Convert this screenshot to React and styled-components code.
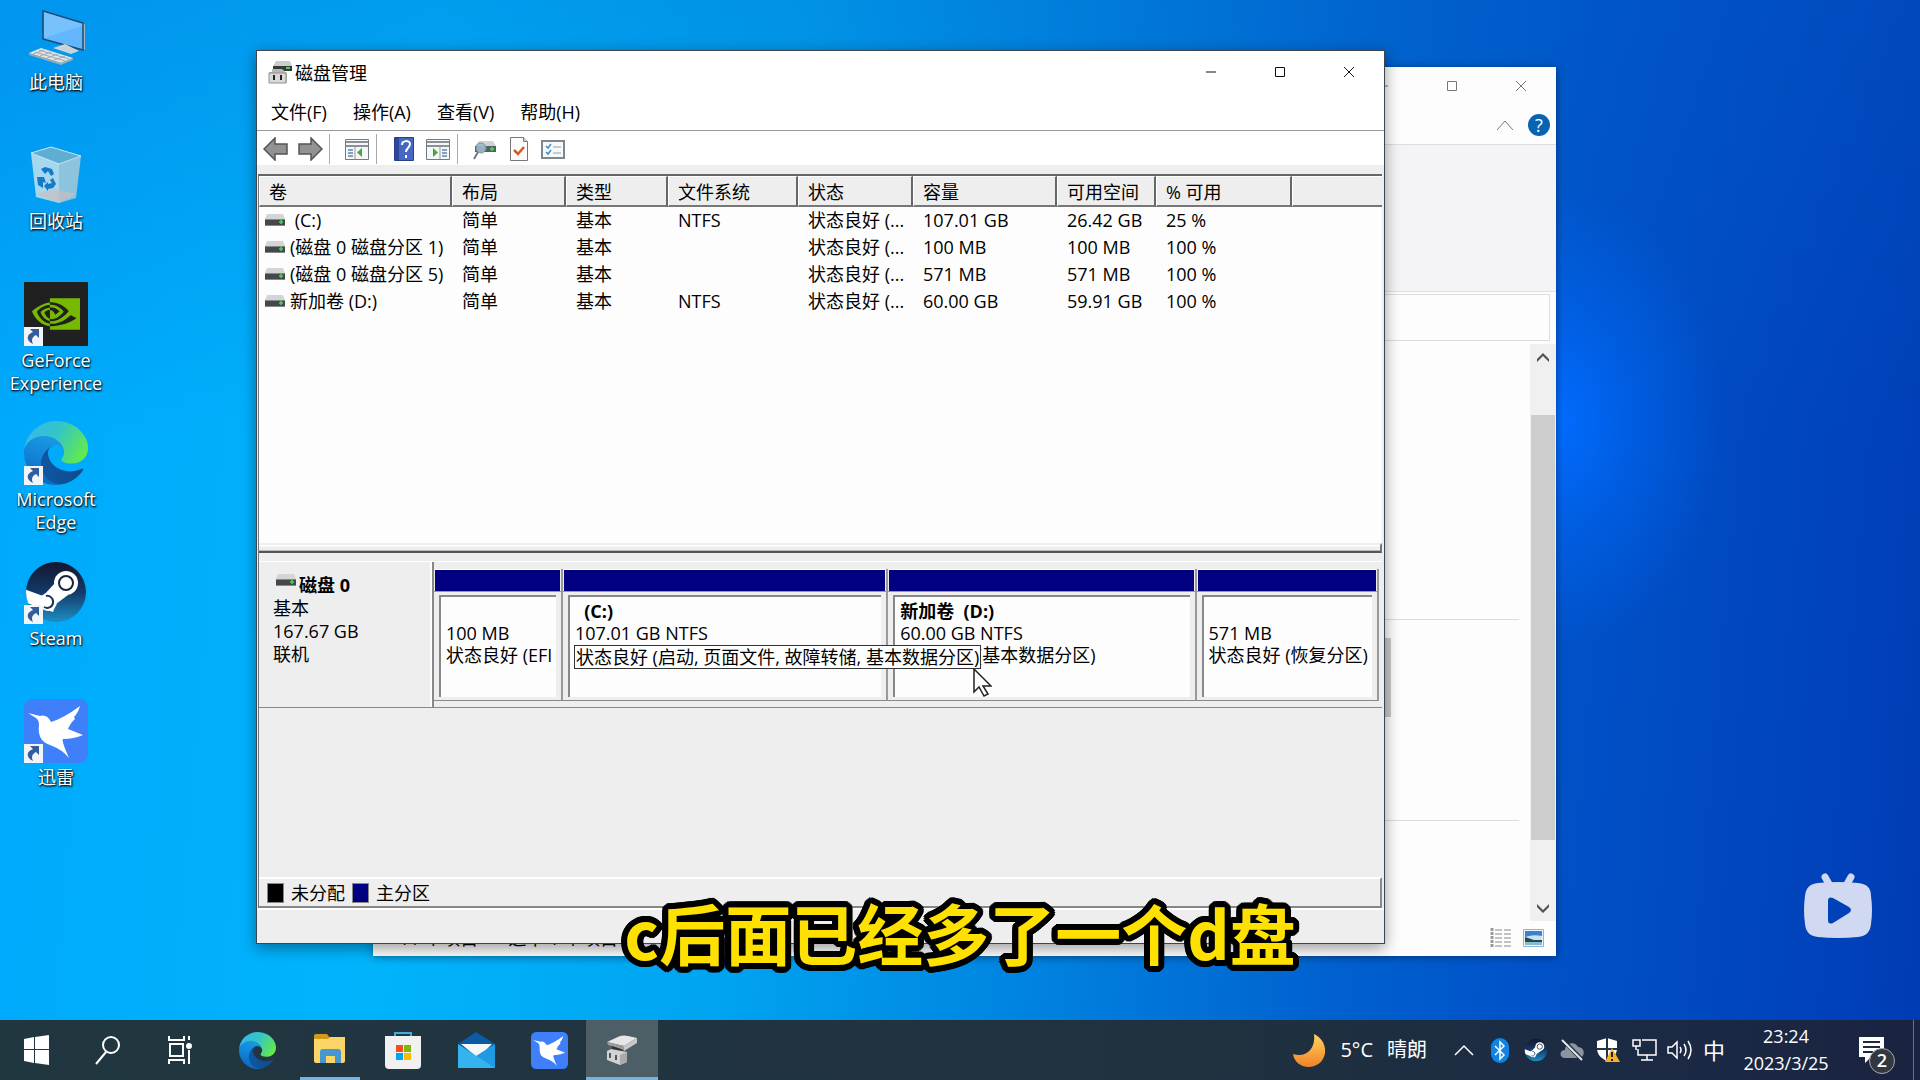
import React from "react"
import styled, { createGlobalStyle, css } from "styled-components"
import { SiNvidia } from "react-icons/si"

const volumes = [
  ["\u00a0(C:)", "简单", "基本", "NTFS", "状态良好 (...", "107.01 GB", "26.42 GB", "25 %"],
  ["(磁盘 0 磁盘分区 1)", "简单", "基本", "", "状态良好 (...", "100 MB", "100 MB", "100 %"],
  ["(磁盘 0 磁盘分区 5)", "简单", "基本", "", "状态良好 (...", "571 MB", "571 MB", "100 %"],
  ["新加卷 (D:)", "简单", "基本", "NTFS", "状态良好 (...", "60.00 GB", "59.91 GB", "100 %"],
]

const columns = [
  { title: "卷", width: 193 },
  { title: "布局", width: 114 },
  { title: "类型", width: 102 },
  { title: "文件系统", width: 130 },
  { title: "状态", width: 115 },
  { title: "容量", width: 144 },
  { title: "可用空间", width: 99 },
  { title: "% 可用", width: 136 },
]

// a hovered partition shows its whole status in the tip
const partitions = [
  { name: "", size: "100 MB", status: "状态良好 (EFI", grow: 128 },
  {
    name: "\u00a0\u00a0(C:)",
    size: "107.01 GB NTFS",
    tip: "状态良好 (启动, 页面文件, 故障转储, 基本数据分区)",
    grow: 326,
  },
  { name: "新加卷  (D:)", size: "60.00 GB NTFS", status: "状态良好 (基本数据分区)", grow: 309 },
  { name: "", size: "571 MB", status: "状态良好 (恢复分区)", grow: 182 },
]

const menus = ["文件(F)", "操作(A)", "查看(V)", "帮助(H)"]

export default function App() {
  return (
    <Desktop>
      <GlobalStyle />
      <Workspace>
        <Shortcuts>
          <Shortcut icon={<ComputerIcon />} label="此电脑" />
          <Shortcut icon={<BinIcon />} label="回收站" />
          <Shortcut icon={<NvidiaTile />} label="GeForce Experience" linked />
          <Shortcut icon={<EdgeIcon size={64} />} label="Microsoft Edge" linked />
          <Shortcut icon={<SteamIcon size={64} />} label="Steam" linked />
          <Shortcut icon={<BirdIcon width={64} height={64} />} label="迅雷" linked />
        </Shortcuts>
        <Explorer />
        <DiskManager />
        <Watermark viewBox="0 0 68 66" aria-label="bilibili">
          <path d="M21 4l4 7M47 4l-4 7" stroke="#d0d9f1" strokeWidth="7" strokeLinecap="round" />
          <path
            fillRule="evenodd"
            fill="#d0d9f1"
            d="M14 10Q34 8 54 10 67 11 67 23Q69 37 67 51 66 63 54 64 34 66 14 64 2 63 1 51-1 37 1 23 2 11 14 10zM24 28v19q0 5 5 3l16-10q4-3 0-6L29 25q-5-2-5 3z"
          />
        </Watermark>
        <Subtitle>c后面已经多了一个d盘</Subtitle>
      </Workspace>
      <Taskbar />
    </Desktop>
  )
}

function Shortcut({ icon, label, linked }) {
  return (
    <ShortcutButton>
      <ShortcutIcon>
        {icon}
        {linked && (
          <LinkMark viewBox="0 0 19 19">
            <path d="M0 0h19v19H0z" fill="#f1f5f8" />
            <path d="M6 2h9v9l-3-3c-4 2-5 5-3 9-8-4-6-10 0-12z" fill="#345b9b" />
          </LinkMark>
        )}
      </ShortcutIcon>
      <ShortcutLabel>{label}</ShortcutLabel>
    </ShortcutButton>
  )
}

function WindowButtons({ dim }) {
  return (
    <Captions $dim={dim}>
      <button aria-label="最小化">
        <svg width="12" height="12" viewBox="0 0 12 12">
          <path d="M1 6h10" />
        </svg>
      </button>
      <button aria-label="最大化">
        <svg width="12" height="12" viewBox="0 0 12 12">
          <path d="M1.500 1.500h9v9h-9z" />
        </svg>
      </button>
      <button aria-label="关闭">
        <svg width="12" height="12" viewBox="0 0 12 12">
          <path d="M1 1l10 10M11 1L1 11" />
        </svg>
      </button>
    </Captions>
  )
}

function Explorer() {
  return (
    <ExplorerWindow>
      <ExplorerTitle>
        <WindowButtons dim />
      </ExplorerTitle>
      <ExplorerTabs>
        <svg width="18" height="12" viewBox="0 0 18 12" fill="none" stroke="#777">
          <path d="M1 11L9 2l8 9" />
        </svg>
        <HelpButton aria-label="帮助">?</HelpButton>
      </ExplorerTabs>
      <Ribbon />
      <AddressRow>
        <input aria-label="搜索" />
      </AddressRow>
      <ExplorerBody>
        <FileArea>
          <Group $size={276} />
          <Group $size={201}>
            <span />
          </Group>
        </FileArea>
        <ScrollBar>
          <svg width="14" height="14" viewBox="0 0 14 14">
            <path d="M1 9l6-6 6 6v3L7 6l-6 6z" />
          </svg>
          <ScrollTrack>
            <ScrollThumb />
          </ScrollTrack>
          <svg width="14" height="14" viewBox="0 0 14 14">
            <path d="M1 6l6 6 6-6V3L7 9 1 3z" />
          </svg>
        </ScrollBar>
      </ExplorerBody>
      <ExplorerStatus>
        <span>11 个项目</span>
        <span>选中 1 个项目</span>
        <ViewButtons>
          <button aria-label="详细信息">
            <svg width="21" height="20" viewBox="0 0 21 20" fill="none">
              <path d="M2 0v20" stroke="#999" strokeWidth="3" strokeDasharray="3 1" />
              <path d="M5 2h7m2 0h7M5 6h7m2 0h7M5 10h7m2 0h7M5 14h7m2 0h7M5 18h7m2 0h7" stroke="#888" />
            </svg>
          </button>
          <button aria-label="大图标">
            <svg width="21" height="18" viewBox="0 0 21 18">
              <path d="M.5.5h20v17H.5z" fill="#eef5fa" stroke="#8fb4d0" />
              <path d="M2 2h17v14H2z" fill="#3d7fd0" />
              <path d="M2 8q8-3 17-1v4H2z" fill="#c8e4f0" />
              <path d="M2 8l9 3h8v2H2z" fill="#234d48" />
              <path d="M2 13h17v3H2z" fill="#8ab9d6" />
            </svg>
          </button>
        </ViewButtons>
      </ExplorerStatus>
    </ExplorerWindow>
  )
}

function DiskManager() {
  return (
    <ManagerWindow>
      <TitleBar>
        <PlugIcon />
        <h1>磁盘管理</h1>
        <WindowButtons />
      </TitleBar>
      <MenuBar>
        {menus.map(item => (
          <button key={item}>{item}</button>
        ))}
      </MenuBar>
      <ToolBar>
        <button aria-label="后退">
          <ArrowIcon />
        </button>
        <button aria-label="前进">
          <ArrowIcon flip />
        </button>
        <hr />
        <button aria-label="显示控制台树">
          <PaneIcon />
        </button>
        <hr />
        <button aria-label="帮助">
          <BookIcon />
        </button>
        <button aria-label="显示操作窗格">
          <PaneIcon flip />
        </button>
        <hr />
        <button aria-label="重新扫描磁盘">
          <svg width="24" height="24" viewBox="0 0 24 24">
            <path d="M6 4h14l3 5H2z" fill="#d0d3d5" />
            <path d="M2 9h21v6H2z" fill="#555f66" />
            <circle cx="8" cy="11" r="5" fill="#9db9c8" fillOpacity=".9" stroke="#7c929e" />
            <path d="M5 15l-4 7" stroke="#778" strokeWidth="2" />
            <path d="M17 12h4M19 10v4" stroke="#3fd13f" strokeWidth="2" />
          </svg>
        </button>
        <button aria-label="属性">
          <svg width="18" height="24" viewBox="0 0 18 24">
            <path d="M.5.5h13l4 4v19H.5z" fill="#fcfcfc" stroke="#777" />
            <path d="M13.500.5v4h4" fill="#ddd" stroke="#777" />
            <path d="M4 13l4 4 6-7" fill="none" stroke="#d8581e" strokeWidth="2.500" />
          </svg>
        </button>
        <button aria-label="列表">
          <svg width="24" height="19" viewBox="0 0 24 19">
            <path d="M1 1h22v17H1z" fill="#f7f8f9" stroke="#7f868c" strokeWidth="2" />
            <path d="M5 6l2 2 3-4M5 12l2 2 3-4" fill="none" stroke="#3b8cc4" strokeWidth="1.500" />
            <path d="M12 7h8M12 13h8" stroke="#b4babf" strokeWidth="1.500" />
          </svg>
        </button>
      </ToolBar>
      <Panes>
        <ListPane>
          <VolumeTable>
            <colgroup>
              {columns.map(col => (
                <Col key={col.title} $size={col.width} />
              ))}
              <col />
            </colgroup>
            <thead>
              <tr>
                {columns.map(col => (
                  <th key={col.title}>{col.title}</th>
                ))}
                <th aria-label="空" />
              </tr>
            </thead>
            <tbody>
              {volumes.map(row => (
                <tr key={row[0]}>
                  {row.map((cell, i) => (
                    <td key={columns[i].title}>
                      {i === 0 && <DriveIcon />}
                      {cell}
                    </td>
                  ))}
                  <td />
                </tr>
              ))}
            </tbody>
          </VolumeTable>
        </ListPane>
        <Splitter />
        <DiskPane>
          <DiskRow>
            <DiskInfo>
              <strong>
                <DriveIcon />
                磁盘 0
              </strong>
              <p>基本</p>
              <p>167.67 GB</p>
              <p>联机</p>
            </DiskInfo>
            <PartitionStrip>
              {partitions.map(part => (
                <Partition key={part.size} $grow={part.grow}>
                  <PartitionBar />
                  <PartitionBody>
                    <PartitionText>
                      <strong>{part.name}</strong>
                      <p>{part.size}</p>
                      {part.status && <p>{part.status}</p>}
                    </PartitionText>
                    {part.tip && (
                      <Tip role="tooltip">
                        {part.tip}
                        <Cursor viewBox="0 0 19 29">
                          <path d="M1 1v23l5-5 5 9 4-2-5-8h8z" fill="#fff" stroke="#222" strokeWidth="1.500" />
                        </Cursor>
                      </Tip>
                    )}
                  </PartitionBody>
                </Partition>
              ))}
            </PartitionStrip>
          </DiskRow>
        </DiskPane>
        <Legend>
          <Swatch $color="#000" />
          <span>未分配</span>
          <Swatch $color="#000080" />
          <span>主分区</span>
        </Legend>
      </Panes>
      <StatusBar />
    </ManagerWindow>
  )
}

function Taskbar() {
  return (
    <Bar>
      <SystemButtons>
        <button aria-label="开始">
          <svg width="25" height="30" viewBox="0 0 25 30" fill="#fff">
            <path d="M0 4l10-2v12H0zM11 2l14-2v14H11zM0 15h10v13L0 26zM11 15h14v15l-14-2z" />
          </svg>
        </button>
        <button aria-label="搜索">
          <svg width="26" height="32" viewBox="0 0 26 32" fill="none" stroke="#fff" strokeWidth="2">
            <circle cx="16" cy="11" r="8" />
            <path d="M11 18L1 30" />
          </svg>
        </button>
        <button aria-label="任务视图">
          <svg width="26" height="30" viewBox="0 0 26 30" fill="none" stroke="#fff" strokeWidth="2">
            <path d="M2 1v4h15V1M2 29v-4h15v4M3 9h13v12H3zM22 1v4M22 15v14" />
            <circle cx="22" cy="11" r="2" fill="#fff" />
          </svg>
        </button>
      </SystemButtons>
      <TaskButton aria-label="Microsoft Edge">
        <EdgeIcon size={37} />
      </TaskButton>
      <TaskButton aria-label="文件资源管理器" $open>
        <svg width="34" height="34" viewBox="0 0 34 34">
          <path d="M1 3q0-2 2-2h11l3 4v8H1z" fill="#d29a16" />
          <path d="M1 6h14l2-2h15v24q0 2-2 2H3q-2 0-2-2z" fill="#fbd567" />
          <path d="M7 30V19q0-3 3-3h15q3 0 3 3v11h-6v-7h-9v7z" fill="#4796d0" />
        </svg>
      </TaskButton>
      <TaskButton aria-label="Microsoft Store">
        <svg width="36" height="38" viewBox="0 0 36 38">
          <path d="M10 8V2h16v6" fill="none" stroke="#44a9df" strokeWidth="2" />
          <path d="M0 5h36v29q0 4-4 4H4q-4 0-4-4z" fill="#f1f1f1" />
          <path d="M11 14h7v7h-7z" fill="#f25022" />
          <path d="M19 14h7v7h-7z" fill="#7fba00" />
          <path d="M11 22h7v7h-7z" fill="#00a4ef" />
          <path d="M19 22h7v7h-7z" fill="#ffb900" />
        </svg>
      </TaskButton>
      <TaskButton aria-label="邮件">
        <svg width="37" height="36" viewBox="0 0 37 36">
          <path d="M0 12L18 0l19 12v10H0z" fill="#0c59a4" />
          <path d="M3 12h31L20 26z" fill="#f4f7f9" />
          <path d="M37 12v24H18V24z" fill="#1e9be2" />
          <path d="M0 12l37 24H0z" fill="#35b3ee" />
        </svg>
      </TaskButton>
      <TaskButton aria-label="迅雷">
        <BirdIcon width={37} height={37} />
      </TaskButton>
      <TaskButton aria-label="磁盘管理" $open $active>
        <svg width="34" height="34" viewBox="0 0 34 34">
          <path d="M2 9L15 3q4-1 8 0l9 2-13 8z" fill="#e6e6e6" />
          <path d="M2 9l17 4v4L3 12z" fill="#9c9c9c" />
          <path d="M19 13l13-8v5l-13 8z" fill="#c7c7c7" />
          <path d="M7 13l9 3 2 2-4 2-7-3z" fill="#333" />
          <path d="M2 18l4-2 16 3v10l-7 3-13-5z" fill="#d2d2d2" />
          <path d="M15 22l7-3v10l-7 3z" fill="#aaa" />
          <path d="M5 20v5M11 22v5" stroke="#555" strokeWidth="2" />
        </svg>
      </TaskButton>
      <Tray>
        <Weather>
          <svg width="34" height="35" viewBox="0 0 34 35">
            <defs>
              <linearGradient id="moon" x2="0" y2="1">
                <stop stopColor="#ffd45b" />
                <stop offset="1" stopColor="#f2812a" />
              </linearGradient>
            </defs>
            <path d="M22 1C39 9 36 33 17 34 8 34 2 28 1 21 14 25 24 16 22 1z" fill="url(#moon)" />
          </svg>
          <span>5°C</span>
          <span>晴朗</span>
        </Weather>
        <TrayButton aria-label="显示隐藏的图标">
          <svg width="20" height="12" viewBox="0 0 20 12" fill="none" stroke="#fff" strokeWidth="1.500">
            <path d="M1 11l9-9 9 9" />
          </svg>
        </TrayButton>
        <TrayButton aria-label="蓝牙">
          <svg width="18" height="25" viewBox="0 0 18 25">
            <rect width="18" height="25" rx="9" fill="#0f84e6" />
            <path d="M4 8l9 9-4 4V4l4 4-9 9" fill="none" stroke="#fff" strokeWidth="1.500" />
          </svg>
        </TrayButton>
        <TrayButton aria-label="Steam">
          <SteamIcon size={24} />
        </TrayButton>
        <TrayButton aria-label="OneDrive">
          <svg width="25" height="22" viewBox="0 0 25 22">
            <path d="M5 19c-6 0-6-8 0-8 0-8 11-9 13-3 7 0 8 10 1 11z" fill="#8c949f" />
            <path d="M3 1l19 20" stroke="#1e2d40" strokeWidth="4" />
            <path d="M2 1l20 20" stroke="#e4e7ea" strokeWidth="2" />
          </svg>
        </TrayButton>
        <TrayButton aria-label="Windows 安全中心">
          <svg width="24" height="26" viewBox="0 0 24 26">
            <path d="M11 1l10 3v7c0 7-5 11-10 13C6 22 1 18 1 11V4z" fill="#fff" />
            <path d="M11 1v22M1 12h20" stroke="#253347" strokeWidth="2" />
            <path d="M16 11l8 14H9z" fill="#f6b125" />
            <path d="M16 15v5M16 22v2" stroke="#222" strokeWidth="2" />
          </svg>
        </TrayButton>
        <TrayButton aria-label="网络">
          <svg width="25" height="24" viewBox="0 0 25 24" fill="none" stroke="#fff" strokeWidth="1.500">
            <path d="M10 2h14v15H6v-6M15 17v5M9 22h12M1 2h7v6H1zM4 8v4" />
          </svg>
        </TrayButton>
        <TrayButton aria-label="音量">
          <svg width="26" height="24" viewBox="0 0 26 24" fill="none" stroke="#fff" strokeWidth="1.500">
            <path d="M1 9h4l5-5v16l-5-5H1zM13 9q2 3 0 6M17 6q4 6 0 12M21 3q6 9 0 18" />
          </svg>
        </TrayButton>
        <InputMode>中</InputMode>
        <Clock>
          <time>23:24</time>
          <time>2023/3/25</time>
        </Clock>
        <Notifications aria-label="通知">
          <svg width="25" height="26" viewBox="0 0 25 26">
            <path d="M0 0h25v20H12l-6 6v-6H0z" fill="#fff" />
            <path d="M4 5h17M4 10h17M4 15h10" stroke="#1c2942" strokeWidth="2" />
          </svg>
          <Badge>2</Badge>
        </Notifications>
      </Tray>
    </Bar>
  )
}

/* icons */

function DriveIcon() {
  return (
    <svg width="20" height="13" viewBox="0 0 20 13">
      <path d="M2 0h16l2 5H0z" fill="#d3d5d6" />
      <path d="M0 5h20v7H0z" fill="#45484a" />
      <path d="M0 5h20v1H0zM0 11h20v1H0z" fill="#85888a" />
      <path d="M14 8h4M16 6v4" stroke="#48d648" strokeWidth="1.500" />
    </svg>
  )
}

function PlugIcon() {
  return (
    <svg width="24" height="24" viewBox="0 0 24 24">
      <path d="M8 1h14l2 5H5z" fill="#ccc" />
      <path d="M5 6h19v5H5z" fill="#333b38" />
      <path d="M18 8h4" stroke="#4bd54b" strokeWidth="2" />
      <path d="M4 9h10l5 4v10H1V12h3z" fill="#b7b7b7" />
      <path d="M1 13h17v10H1z" fill="#d9d9d9" stroke="#909090" />
      <path d="M6 15v5M13 15v5" stroke="#222" strokeWidth="2" />
    </svg>
  )
}

function ArrowIcon({ flip }) {
  return (
    <svg width="26" height="24" viewBox="0 0 26 24">
      <path
        transform={flip ? "matrix(-1 0 0 1 26 0)" : undefined}
        d="M1 12L12 1v6h12v10H12v6z"
        fill="#929292"
        stroke="#555"
        strokeWidth="1.500"
      />
    </svg>
  )
}

function PaneIcon({ flip }) {
  return (
    <svg width="24" height="21" viewBox="0 0 24 21">
      <path d="M.5.5h23v20H.5z" fill="#f5f6f7" stroke="#747b80" />
      <path d="M1 3h22M1 7h22" stroke="#8a9196" strokeWidth="2" />
      <g transform={flip ? "matrix(-1 0 0 1 24 0)" : undefined}>
        <path d="M3 11h5M3 14h5M3 17h5" stroke="#5d86ad" strokeWidth="1.500" />
        <path d="M10 8v12" stroke="#999" />
        <path d="M17 9v9l-5-4.500z" fill="#41a935" />
      </g>
    </svg>
  )
}

function BookIcon() {
  return (
    <svg width="20" height="24" viewBox="0 0 20 24">
      <path d="M.5.5h19v23H.5z" fill="#4668c4" stroke="#27408b" />
      <path d="M1 1h4v22H1z" fill="#2c479b" />
      <path d="M8 8c0-5 8-5 8-1 0 4-4 4-4 8M12 18v3" fill="none" stroke="#fff" strokeWidth="2" />
    </svg>
  )
}

function ComputerIcon() {
  return (
    <svg width="64" height="64" viewBox="0 0 64 64">
      <path d="M20 7l41 13v26l-3-1z" fill="#9fb4c0" />
      <path d="M19 7l40 12v27L19 35z" fill="#62b6fb" stroke="#1d4870" strokeWidth="1.500" />
      <path d="M20 34L58 22V20L20 8z" fill="#86c8fd" opacity=".6" />
      <path d="M29 44l12-4 14 7-8 3z" fill="#c9d3d9" />
      <path d="M5 49l12-5 32 10-12 5z" fill="#e0e4e6" />
      <path d="M11 48l30 9M15 46l30 9M20 46l-11 4M27 48l-11 4M34 50l-11 4M41 52l-11 4" stroke="#a0a9ae" />
      <path d="M5 49v2l32 10 12-5v-2l-12 5z" fill="#9da9b0" />
    </svg>
  )
}

function BinIcon() {
  return (
    <svg width="64" height="64" viewBox="0 0 64 64">
      <path d="M7 10l20-6 30 9-22 8z" fill="#5fadd0" />
      <path d="M7 10l28 11v39L12 54z" fill="#a5d7ee" />
      <path d="M57 13L35 21v39l17-5z" fill="#8dc3dd" />
      <path d="M12 51l18-5 22 5-17 9z" fill="#c7bfc2" opacity=".7" />
      <path d="M7 10l20-6 30 9-22 8z" fill="none" stroke="#c5e6f4" />
      <g fill="#1679c8">
        <path d="M17 26l4-2 7 2 2 5-3 2-3-5-3 3z" />
        <path d="M13 34l7 0 2 6-3-1 0 6-5-3z" />
        <path d="M29 35l3 6-3 4-5 1v2l-4-5 4-4v2l4-1-2-3z" />
      </g>
    </svg>
  )
}

function NvidiaTile() {
  return (
    <NvidiaBox>
      <SiNvidia size={48} />
    </NvidiaBox>
  )
}

function EdgeIcon({ size }) {
  const id = `edge${size}`
  return (
    <svg width={size} height={size} viewBox="0 0 256 256">
      <defs>
        <linearGradient id={`${id}a`} x1="0" x2="1">
          <stop stopColor="#0c59a4" />
          <stop offset="1" stopColor="#114a8b" />
        </linearGradient>
        <linearGradient id={`${id}b`} x1=".6" y1="0" x2=".3" y2="1">
          <stop stopColor="#1b9de2" />
          <stop offset=".5" stopColor="#1383d6" />
          <stop offset="1" stopColor="#0863b8" />
        </linearGradient>
        <linearGradient id={`${id}c`} x1="0" y1=".3" x2="1" y2=".7">
          <stop stopColor="#35b8ee" />
          <stop offset=".45" stopColor="#34c6c6" />
          <stop offset="1" stopColor="#66eb45" />
        </linearGradient>
      </defs>
      <path
        fill={`url(#${id}a)`}
        d="M231.07 190.54c-3.400 1.770-6.900 3.360-10.510 4.740a101.800 101.800 0 01-35.900 6.460c-47.310 0-88.540-32.540-88.540-74.310A31.480 31.480 0 01112.550 100c-42.800 1.800-53.800 46.400-53.800 72.530 0 73.880 68.100 81.370 82.760 81.370 7.910 0 19.840-2.300 27-4.560l1.310-.44a128.340 128.340 0 0066.600-52.800 4 4 0 00-5.350-5.560z"
      />
      <path
        fill={`url(#${id}b)`}
        d="M105.730 241.420a79.200 79.200 0 01-22.740-21.340 80.720 80.720 0 0129.530-120c3.120-1.470 8.450-4.130 15.540-4a32.350 32.350 0 0125.690 13 31.880 31.880 0 016.360 18.660c0-.21 24.460-79.600-80-79.600-43.900 0-80 41.660-80 78.210a130.150 130.150 0 0012.110 56 128 128 0 00156.380 67.110 75.550 75.550 0 01-62.780-8z"
      />
      <path
        fill={`url(#${id}c)`}
        d="M152.290 148.860c-.81 1.050-3.300 2.500-3.300 5.660 0 2.610 1.700 5.120 4.720 7.230 14.380 10 41.490 8.680 41.560 8.680a59.560 59.560 0 0030.270-8.350A61.380 61.380 0 00256 109.240c.26-22.410-8-37.310-11.340-43.910C223.460 23.840 177.720 0 128 0A128 128 0 000 126.200c.48-36.540 36.800-66.050 80-66.050 3.500 0 23.460.34 42 10.070 16.340 8.580 24.900 18.940 30.850 29.210 6.180 10.670 7.280 24.150 7.280 29.520s-2.740 13.330-7.840 19.910z"
      />
    </svg>
  )
}

function SteamIcon({ size }) {
  const id = `steam${size}`
  return (
    <svg width={size} height={size} viewBox="0 0 64 64">
      <defs>
        <linearGradient id={id} x2="0" y2="1">
          <stop stopColor="#14152f" />
          <stop offset=".5" stopColor="#123a68" />
          <stop offset="1" stopColor="#1d8fc4" />
        </linearGradient>
        <clipPath id={`${id}c`}>
          <circle cx="32" cy="32" r="30" />
        </clipPath>
      </defs>
      <circle cx="32" cy="32" r="30" fill={`url(#${id})`} />
      <g clipPath={`url(#${id}c)`}>
        <path d="M0 29l19 7 12-13 13 12-12 9-3 8-29-10z" fill="#fff" />
        <circle cx="42" cy="23" r="12" fill="#fff" />
        <circle cx="42" cy="23" r="7" fill="#fff" stroke="#17233f" strokeWidth="2" />
        <circle cx="24" cy="42" r="9" fill="#fff" />
        <path d="M22 36a6 6 0 11-2 11" fill="none" stroke="#17385f" strokeWidth="2" />
      </g>
    </svg>
  )
}

function BirdIcon({ width, height }) {
  return (
    <svg width={width} height={height} viewBox="0 0 64 64">
      <rect width="64" height="64" rx="9" fill="#3f80fa" />
      <path
        fill="#fff"
        d="M4 14l12 3q7-2 11 6Q40 19 56 7q-2 7-6 11l1 2q-4 3-7 10l15 6q-9 4-20 4-2 1 6 19-6-8-19-13-13-4-11-20 0-5-3-7z"
      />
    </svg>
  )
}

/* styles */

const GlobalStyle = createGlobalStyle`
  * {
    box-sizing: border-box;
  }
  body {
    margin: 0;
    overflow: hidden;
    font: 18px/22px "Open Sans", "Noto Sans CJK SC", sans-serif;
    color: #000;
  }
  button {
    display: flex;
    align-items: center;
    justify-content: center;
    padding: 0;
    border: none;
    background: transparent;
    font: inherit;
    color: inherit;
  }
  p, h1 {
    margin: 0;
    font-size: 18px;
    font-weight: 400;
  }
  svg {
    flex: none;
  }
`
const Desktop = styled.main`
  display: flex;
  flex-direction: column;
  min-height: 100vh;
  background: radial-gradient(ellipse 170px 230px at 81% 39%, #006cff, #006cff77 45%, #006cff00),
    linear-gradient(#0060c844, #0060c800 40%),
    linear-gradient(
      95deg,
      #00a8fc 0%,
      #00b4fc 22%,
      #00a4f0 40%,
      #0086e2 54%,
      #0062cf 70%,
      #0052c8 80%,
      #0046be 91%,
      #003cb4 100%
    );
`
const Workspace = styled.div`
  position: relative;
  flex: 1;
`
const Shortcuts = styled.nav`
  display: grid;
  grid-auto-rows: 139px;
  width: 112px;
  padding-top: 4px;
`
const ShortcutButton = styled.button`
  flex-direction: column;
  justify-content: flex-start;
  gap: 3px;
`
const ShortcutIcon = styled.span`
  position: relative;
  display: flex;
  width: 64px;
  height: 64px;
`
const LinkMark = styled.svg`
  position: absolute;
  left: 0;
  bottom: 0;
  width: 19px;
  height: 19px;
`
const ShortcutLabel = styled.span`
  color: #fff;
  line-height: 23px;
  text-shadow: 1px 1px 2px #000, 0 1px 2px #000a;
`
const NvidiaBox = styled.span`
  display: flex;
  align-items: center;
  justify-content: center;
  width: 64px;
  height: 64px;
  background: #202020;
  color: #76b900;
`
const windowFrame = css`
  position: absolute;
  display: flex;
  flex-direction: column;
  min-width: 640px;
`
const ExplorerWindow = styled.section`
  ${windowFrame}
  inset: 67px 364px 64px 373px;
  background: #fdfdfd;
  box-shadow: 0 1px 8px #0006;
`
const ManagerWindow = styled.section`
  ${windowFrame}
  inset: 50px 535px 76px 256px;
  border: 1px solid #3c4650;
  background: #eee;
  box-shadow: 0 4px 14px #0006;
`
const Captions = styled.div`
  display: flex;
  align-self: stretch;
  margin-right: 1px;
  margin-left: auto;
  button {
    width: 69px;
  }
  svg {
    fill: none;
    stroke: ${({ $dim }) => ($dim ? "#777" : "#111")};
  }
`
const ExplorerTitle = styled.header`
  display: flex;
  height: 38px;
`
const ExplorerTabs = styled.div`
  display: flex;
  align-items: center;
  justify-content: flex-end;
  gap: 14px;
  height: 40px;
  padding-right: 6px;
  border-bottom: 1px solid #ddd;
`
const HelpButton = styled.button`
  width: 22px;
  height: 22px;
  border-radius: 50%;
  background: #0864b1;
  color: #fff;
`
const Ribbon = styled.div`
  height: 147px;
  background: #f4f4f6;
  border-bottom: 1px solid #e0e0e0;
`
const AddressRow = styled.div`
  display: flex;
  height: 52px;
  padding: 2px 6px 3px 800px;
  input {
    width: 100%;
    border: 1px solid #ddd;
    background: transparent;
  }
`
const ExplorerBody = styled.div`
  display: flex;
  flex: 1;
`
const FileArea = styled.div`
  flex: 1;
  padding-right: 11px;
`
const Group = styled.div`
  height: ${({ $size }) => $size}px;
  border-bottom: 1px solid #ddd;
  span {
    display: block;
    width: 1018px;
    height: 97px;
    border-top: 18px solid #fdfdfd;
    background: #c9c9c9;
  }
`
const ScrollBar = styled.div`
  display: flex;
  flex-direction: column;
  align-items: center;
  justify-content: space-between;
  width: 26px;
  padding: 6px 1px;
  background: #f0f0f0;
  svg {
    fill: #505050;
  }
`
const ScrollTrack = styled.div`
  display: flex;
  flex: 1;
  align-self: stretch;
  padding: 51px 0 61px;
`
const ScrollThumb = styled.div`
  flex: 1;
  background: #cdcdcd;
`
const ExplorerStatus = styled.footer`
  display: flex;
  align-items: center;
  gap: 30px;
  height: 35px;
  padding: 0 12px 2px 26px;
`
const ViewButtons = styled.div`
  display: flex;
  align-items: center;
  gap: 12px;
  margin-left: auto;
`
const TitleBar = styled.header`
  display: flex;
  align-items: center;
  gap: 3px;
  height: 42px;
  padding-left: 11px;
  background: #fff;
  h1 {
    padding-top: 2px;
  }
`
const MenuBar = styled.nav`
  display: flex;
  height: 37px;
  padding-left: 1px;
  background: #fff;
  button {
    padding: 0 13px;
  }
`
const ToolBar = styled.div`
  display: flex;
  align-items: center;
  height: 35px;
  padding: 2px 0 0 2px;
  border-top: 1px solid #999;
  background: #fff;
  button {
    width: 34px;
    height: 32px;
  }
  hr {
    width: 1px;
    height: 30px;
    margin: 0 10px 0 2px;
    border: none;
    background: #aaa;
  }
`
const Panes = styled.div`
  display: flex;
  flex: 1;
  flex-direction: column;
  margin: 9px 2px 0 1px;
  border-left: 1px solid #777;
`
const ListPane = styled.div`
  flex: 373 1 0;
  border-top: 2px solid #666;
  background: #fdfdfd;
`
const Col = styled.col`
  width: ${({ $size }) => $size}px;
`
const VolumeTable = styled.table`
  width: 100%;
  table-layout: fixed;
  border-collapse: separate;
  border-spacing: 0;
  text-align: left;
  th {
    height: 31px;
    padding: 2px 0 0 9px;
    border: 1px solid #fff;
    border-right: 2px solid #666;
    border-bottom: 2px solid #777;
    background: #eee;
    font-weight: 400;
  }
  th:last-child {
    border-right: none;
  }
  td {
    height: 27px;
    padding: 0 0 2px 10px;
    white-space: nowrap;
  }
  td:first-child {
    padding-left: 6px;
  }
  svg {
    margin-right: 5px;
  }
`
const Splitter = styled.div`
  height: 10px;
  border-top: 2px solid #eee;
  border-right: 2px solid #777;
  border-bottom: 2px solid #555;
  background: linear-gradient(#fff 1px, #eee 2px 5px, #bbb 5px);
`
const DiskPane = styled.div`
  flex: 321 1 0;
  padding-top: 8px;
`
const DiskRow = styled.div`
  display: flex;
  height: 147px;
  border-top: 1px solid #fff;
  border-bottom: 1px solid #888;
`
const DiskInfo = styled.div`
  width: 175px;
  padding: 12px 0 0 14px;
  border-right: 2px solid #888;
  box-shadow: inset -2px 0 #fff;
  line-height: 23px;
  strong {
    display: flex;
    gap: 3px;
    padding-left: 3px;
  }
`
const PartitionStrip = styled.div`
  display: flex;
  flex: 1;
  padding: 7px 3px 6px 0;
`
const Partition = styled.div`
  display: flex;
  flex: ${({ $grow }) => $grow} 1 0;
  flex-direction: column;
  min-width: 0;
  border-right: 2px solid #999;
  border-bottom: 1px solid #888;
`
const PartitionBar = styled.div`
  height: 22px;
  margin: 0 1px;
  border-top: 1px solid #fff;
  background: #000080;
`
const PartitionBody = styled.div`
  position: relative;
  display: flex;
  flex: 1;
  padding: 3px 5px;
  border-top: 1px solid #999;
`
const PartitionText = styled.div`
  flex: 1;
  min-width: 0;
  padding: 3px 2px 0 5px;
  border-top: 2px solid #888;
  border-left: 2px solid #888;
  background: #fdfdfd;
  white-space: pre;
  p {
    overflow: hidden;
  }
  strong {
    display: block;
    height: 22px;
  }
`
const Tip = styled.div`
  position: absolute;
  z-index: 1;
  top: 53px;
  left: 11px;
  padding: 0 1px;
  border: 1px solid #333;
  background: #fff;
  white-space: nowrap;
`
const Cursor = styled.svg`
  position: absolute;
  top: 100%;
  right: -12px;
  width: 19px;
  height: 29px;
`
const Legend = styled.div`
  display: flex;
  align-items: center;
  height: 31px;
  padding-left: 8px;
  border-top: 2px solid #fff;
  border-right: 2px solid #888;
  border-bottom: 2px solid #888;
  span {
    padding: 0 7px;
  }
`
const Swatch = styled.i`
  width: 17px;
  height: 20px;
  border: 1px solid #888;
  background: ${({ $color }) => $color};
`
const StatusBar = styled.footer`
  height: 35px;
  border-top: 2px solid #fff;
`
const Watermark = styled.svg`
  position: absolute;
  right: 48px;
  bottom: 81px;
  width: 68px;
  height: 66px;
`
// ring of hard shadows, gives the outline round corners
const outline = Array.from({ length: 24 }, (_, i) => {
  const angle = (i / 24) * Math.PI * 2
  return `${(Math.cos(angle) * 6).toFixed(2)}px ${(Math.sin(angle) * 6).toFixed(2)}px #000`
}).join(", ")

const Subtitle = styled.p`
  position: absolute;
  right: 0;
  bottom: 41px;
  left: 0;
  color: #ffe100;
  font: 700 66px/96px "Noto Sans CJK SC", sans-serif;
  text-align: center;
  text-shadow: ${outline};
`
const Bar = styled.footer`
  display: flex;
  height: 60px;
  background: linear-gradient(90deg, #213740, #20323f 60%, #1b2944 88%, #1a2340);
  color: #fff;
`
const SystemButtons = styled.div`
  display: flex;
  margin-right: 5px;
  button {
    width: 72px;
    height: 60px;
  }
`
const TaskButton = styled.button`
  position: relative;
  width: 72px;
  height: 60px;
  margin-right: 1px;
  background: ${({ $active }) => ($active ? "#4d5e66" : "transparent")};
  &::after {
    content: "";
    position: absolute;
    right: ${({ $active }) => ($active ? 0 : 6)}px;
    bottom: 0;
    left: ${({ $active }) => ($active ? 0 : 6)}px;
    height: ${({ $open }) => ($open ? 3 : 0)}px;
    background: #76b4df;
  }
`
const Tray = styled.div`
  display: flex;
  align-items: center;
  margin-left: auto;
  margin-right: 6px;
  border-right: 1px solid #6c7488;
`
const Weather = styled.button`
  gap: 14px;
  margin-right: 19px;
  font-size: 20px;
`
const TrayButton = styled.button`
  width: 36px;
  height: 60px;
`
const InputMode = styled.button`
  width: 32px;
  font-size: 22px;
`
const Clock = styled.div`
  display: flex;
  flex-direction: column;
  align-items: center;
  width: 112px;
  line-height: 27px;
`
const Notifications = styled.button`
  position: relative;
  width: 58px;
  height: 60px;
  margin-right: 13px;
`
const Badge = styled.span`
  position: absolute;
  right: 5px;
  bottom: 6px;
  width: 26px;
  height: 26px;
  border: 1px solid #aaa;
  border-radius: 50%;
  background: #33373f;
  font-weight: 600;
`
